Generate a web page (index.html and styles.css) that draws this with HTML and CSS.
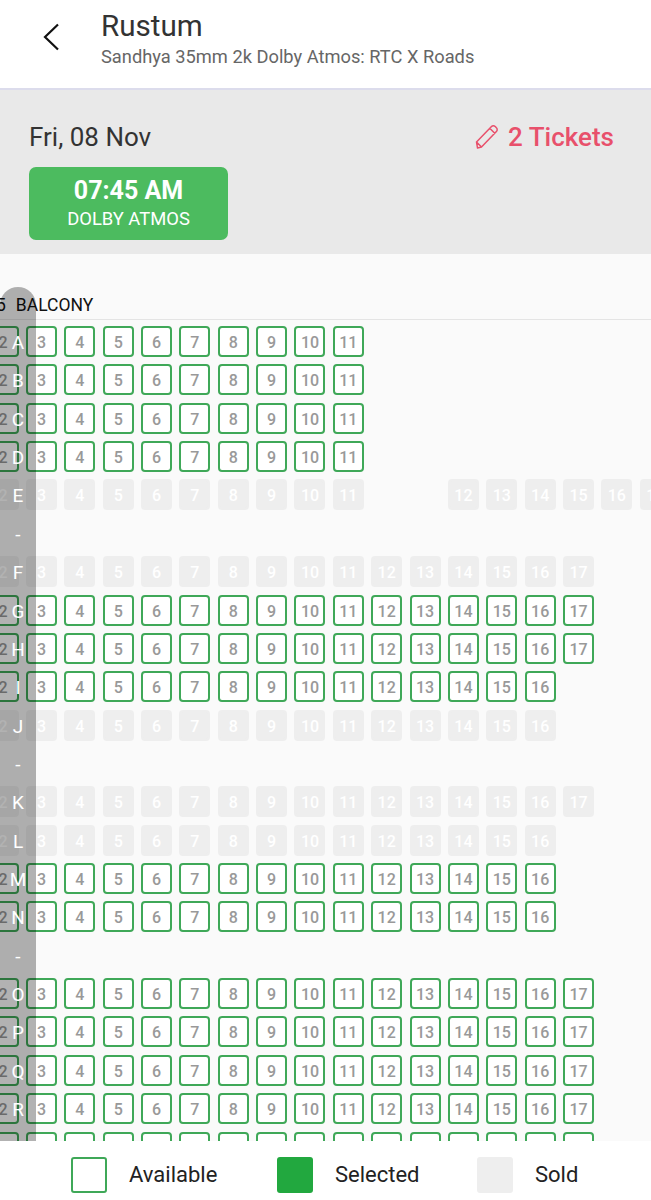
FILE: index.html
```html
<!DOCTYPE html>
<html lang="en">
<head>
<meta charset="utf-8">
<title>Rustum</title>
<link rel="stylesheet" href="styles.css">
</head>
<body>
<div class="page">
<header class="top">
  <svg class="back" width="18" height="28" viewBox="0 0 18 28"><path d="M16 1.5 3 14l13 12.500" fill="none" stroke="#111" stroke-width="2.200"/></svg>
  <div class="titles">
    <div class="title">Rustum</div>
    <div class="sub">Sandhya 35mm 2k Dolby Atmos: RTC X Roads</div>
  </div>
</header>
<section class="band">
  <div class="bandrow">
    <div class="date">Fri, 08 Nov</div>
    <div class="tickets">
      <svg class="pencil" width="24" height="26" viewBox="0 0 24 26"><path d="M2.500 24 1.500 18 16.500 2.500a2.600 2.600 0 0 1 3.700 0l1.200 1.300a2.600 2.600 0 0 1 0 3.700L6.500 23zM1.500 18l5 5M15 4.500l5 5" fill="none" stroke="#e8506b" stroke-width="1.500" stroke-linejoin="round"/></svg>
      <span>2 Tickets</span>
    </div>
  </div>
  <div class="showtime"><div class="time">07:45 AM</div><div class="fmt">DOLBY ATMOS</div></div>
</section>
<main class="map">
  <div class="labels">
    <span>A</span><span>B</span><span>C</span><span>D</span><span>E</span><span>-</span><span>F</span><span>G</span><span>H</span><span>I</span><span>J</span><span>-</span><span>K</span><span>L</span><span>M</span><span>N</span><span>-</span><span>O</span><span>P</span><span>Q</span><span>R</span><span></span>
  </div>
  <div class="section"><span class="price">5</span><span class="secname">BALCONY</span></div>
  <div class="rows">
    <div class="row"><b>2</b><b>3</b><b>4</b><b>5</b><b>6</b><b>7</b><b>8</b><b>9</b><b>10</b><b>11</b></div>
    <div class="row"><b>2</b><b>3</b><b>4</b><b>5</b><b>6</b><b>7</b><b>8</b><b>9</b><b>10</b><b>11</b></div>
    <div class="row"><b>2</b><b>3</b><b>4</b><b>5</b><b>6</b><b>7</b><b>8</b><b>9</b><b>10</b><b>11</b></div>
    <div class="row"><b>2</b><b>3</b><b>4</b><b>5</b><b>6</b><b>7</b><b>8</b><b>9</b><b>10</b><b>11</b></div>
    <div class="row sold"><b>2</b><b>3</b><b>4</b><b>5</b><b>6</b><b>7</b><b>8</b><b>9</b><b>10</b><b>11</b><i></i><i></i><b>12</b><b>13</b><b>14</b><b>15</b><b>16</b><b>17</b></div>
    <div class="row"></div>
    <div class="row sold"><b>2</b><b>3</b><b>4</b><b>5</b><b>6</b><b>7</b><b>8</b><b>9</b><b>10</b><b>11</b><b>12</b><b>13</b><b>14</b><b>15</b><b>16</b><b>17</b></div>
    <div class="row"><b>2</b><b>3</b><b>4</b><b>5</b><b>6</b><b>7</b><b>8</b><b>9</b><b>10</b><b>11</b><b>12</b><b>13</b><b>14</b><b>15</b><b>16</b><b>17</b></div>
    <div class="row"><b>2</b><b>3</b><b>4</b><b>5</b><b>6</b><b>7</b><b>8</b><b>9</b><b>10</b><b>11</b><b>12</b><b>13</b><b>14</b><b>15</b><b>16</b><b>17</b></div>
    <div class="row"><b>2</b><b>3</b><b>4</b><b>5</b><b>6</b><b>7</b><b>8</b><b>9</b><b>10</b><b>11</b><b>12</b><b>13</b><b>14</b><b>15</b><b>16</b></div>
    <div class="row sold"><b>2</b><b>3</b><b>4</b><b>5</b><b>6</b><b>7</b><b>8</b><b>9</b><b>10</b><b>11</b><b>12</b><b>13</b><b>14</b><b>15</b><b>16</b></div>
    <div class="row"></div>
    <div class="row sold"><b>2</b><b>3</b><b>4</b><b>5</b><b>6</b><b>7</b><b>8</b><b>9</b><b>10</b><b>11</b><b>12</b><b>13</b><b>14</b><b>15</b><b>16</b><b>17</b></div>
    <div class="row sold"><b>2</b><b>3</b><b>4</b><b>5</b><b>6</b><b>7</b><b>8</b><b>9</b><b>10</b><b>11</b><b>12</b><b>13</b><b>14</b><b>15</b><b>16</b></div>
    <div class="row"><b>2</b><b>3</b><b>4</b><b>5</b><b>6</b><b>7</b><b>8</b><b>9</b><b>10</b><b>11</b><b>12</b><b>13</b><b>14</b><b>15</b><b>16</b></div>
    <div class="row"><b>2</b><b>3</b><b>4</b><b>5</b><b>6</b><b>7</b><b>8</b><b>9</b><b>10</b><b>11</b><b>12</b><b>13</b><b>14</b><b>15</b><b>16</b></div>
    <div class="row"></div>
    <div class="row"><b>2</b><b>3</b><b>4</b><b>5</b><b>6</b><b>7</b><b>8</b><b>9</b><b>10</b><b>11</b><b>12</b><b>13</b><b>14</b><b>15</b><b>16</b><b>17</b></div>
    <div class="row"><b>2</b><b>3</b><b>4</b><b>5</b><b>6</b><b>7</b><b>8</b><b>9</b><b>10</b><b>11</b><b>12</b><b>13</b><b>14</b><b>15</b><b>16</b><b>17</b></div>
    <div class="row"><b>2</b><b>3</b><b>4</b><b>5</b><b>6</b><b>7</b><b>8</b><b>9</b><b>10</b><b>11</b><b>12</b><b>13</b><b>14</b><b>15</b><b>16</b><b>17</b></div>
    <div class="row"><b>2</b><b>3</b><b>4</b><b>5</b><b>6</b><b>7</b><b>8</b><b>9</b><b>10</b><b>11</b><b>12</b><b>13</b><b>14</b><b>15</b><b>16</b><b>17</b></div>
    <div class="row"><b>2</b><b>3</b><b>4</b><b>5</b><b>6</b><b>7</b><b>8</b><b>9</b><b>10</b><b>11</b><b>12</b><b>13</b><b>14</b><b>15</b><b>16</b><b>17</b></div>
  </div>
</main>
<footer class="legend">
  <div class="item item-a"><span class="box box-avail"></span><span>Available</span></div>
  <div class="item item-s"><span class="box box-sel"></span><span>Selected</span></div>
  <div class="item"><span class="box box-sold"></span><span>Sold</span></div>
</footer>
</div>
</body>
</html>
```
FILE: styles.css
```css
* { box-sizing: border-box; }
html, body { margin: 0; padding: 0; }
body { font-family: Roboto, "Liberation Sans", sans-serif; background: #fff; }
.page { display: flex; flex-direction: column; height: 1200px; overflow: hidden; }

.top { height: 90px; flex: none; background: #fff; border-bottom: 2px solid #dcdcec; display: flex; align-items: flex-start; padding-left: 42px; }
.back { margin-top: 23px; flex: none; }
.titles { margin-left: 41px; padding-top: 9px; }
.title { font-size: 29.6px; line-height: 34px; color: #333; }
.sub { font-size: 18.3px; line-height: 22px; color: #666; margin-top: 3px; }

.band { height: 164px; flex: none; background: #e9e9e9; padding: 31px 37px 0 29px; }
.bandrow { display: flex; justify-content: space-between; align-items: center; height: 32px; }
.date { font-size: 26px; color: #333; }
.tickets { display: flex; align-items: center; gap: 9px; color: #e8506b; font-size: 26px; font-weight: 500; }
.pencil { flex: none; }
.showtime { margin-top: 14px; width: 199px; height: 73px; background: #4cbb5f; border-radius: 7px; color: #fff; text-align: center; padding-top: 9px; }
.time { font-size: 25px; line-height: 30px; font-weight: 700; }
.fmt { font-size: 18.400px; line-height: 24px; margin-top: 1px; }

.map { flex: 1; position: relative; overflow: hidden; background: #fafafa; }
.labels { position: absolute; left: 0; top: 33px; bottom: -20px; width: 36px; background: rgba(0,0,0,.3); border-radius: 18px 18px 0 0; padding-top: 40px; display: flex; flex-direction: column; gap: 7.36px; color: #fff; font-size: 19px; }
.labels span { flex: none; height: 31px; line-height: 31px; text-align: center; }

.section { height: 33px; margin-top: 33px; border-bottom: 1px solid #e4e4e4; display: flex; align-items: center; font-size: 17.500px; color: #111; overflow: hidden; padding-top: 4px; }
.price { margin-left: -4px; }
.secname { margin-left: 10px; }

.rows { margin: 6px 0 0 -12.400px; display: flex; flex-direction: column; gap: 7.36px; }
.row { display: flex; gap: 7.36px; height: 31px; }
.row b, .row i { flex: none; width: 31px; height: 31px; display: block; }
.row b { border: 2px solid #3fa858; border-radius: 4px; background: #fff; color: #999; font-weight: 500; font-size: 16px; line-height: 29px; text-align: center; }
.sold b { border-color: #eee; background: #eee; color: #fff; }

.legend { height: 59px; flex: none; background: #fff; display: flex; align-items: center; padding: 8px 0 0 71px; font-size: 22px; color: #222; }
.item { display: flex; align-items: center; gap: 22px; }
.item-a { width: 206px; }
.item-s { width: 200px; }
.box { width: 36px; height: 36px; border-radius: 3px; display: block; }
.box-avail { border: 2px solid #3fa858; background: #fff; }
.box-sel { background: #22a83f; }
.box-sold { background: #eee; }
```
